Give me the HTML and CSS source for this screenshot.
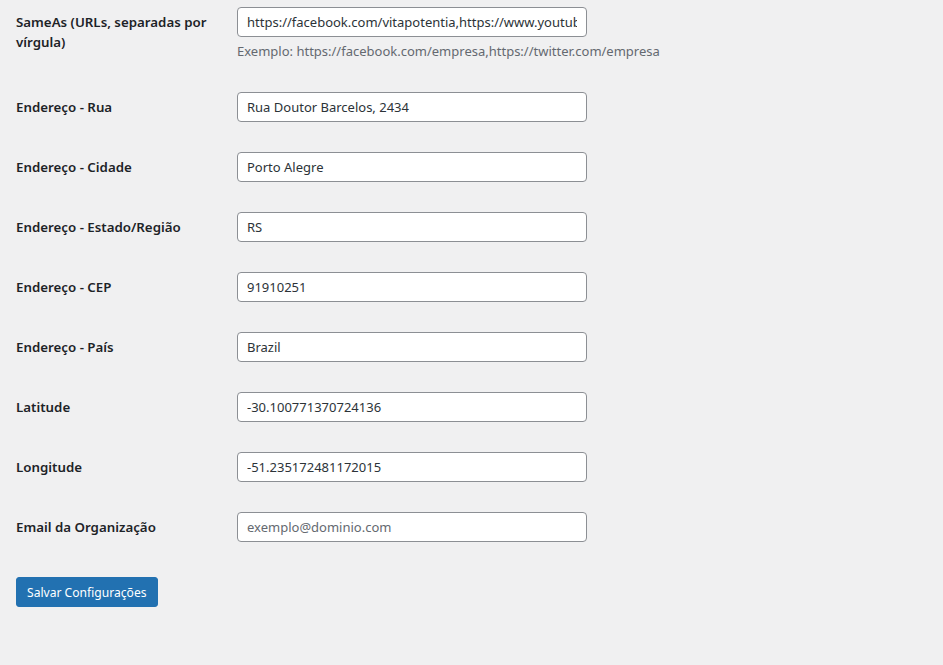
FILE: index.html
```html
<!DOCTYPE html>
<html lang="pt-BR">
<head>
	<meta charset="UTF-8">
	<title>Configurações da Organização</title>
	<link rel="stylesheet" href="styles.css">
</head>
<body>
	<div class="wrap">
		<form class="settings">
			<div class="row row-desc">
				<label class="label" for="sameas">SameAs (URLs, separadas por vírgula)</label>
				<div class="control">
					<input id="sameas" class="text" type="text" value="https://facebook.com/vitapotentia,https://www.youtube.com/vitapotentia">
					<p class="description">Exemplo: https://facebook.com/empresa,https://twitter.com/empresa</p>
				</div>
			</div>
			<div class="row">
				<label class="label" for="rua">Endereço - Rua</label>
				<div class="control"><input id="rua" class="text" type="text" value="Rua Doutor Barcelos, 2434"></div>
			</div>
			<div class="row">
				<label class="label" for="cidade">Endereço - Cidade</label>
				<div class="control"><input id="cidade" class="text" type="text" value="Porto Alegre"></div>
			</div>
			<div class="row">
				<label class="label" for="estado">Endereço - Estado/Região</label>
				<div class="control"><input id="estado" class="text" type="text" value="RS"></div>
			</div>
			<div class="row">
				<label class="label" for="cep">Endereço - CEP</label>
				<div class="control"><input id="cep" class="text" type="text" value="91910251"></div>
			</div>
			<div class="row">
				<label class="label" for="pais">Endereço - País</label>
				<div class="control"><input id="pais" class="text" type="text" value="Brazil"></div>
			</div>
			<div class="row">
				<label class="label" for="lat">Latitude</label>
				<div class="control"><input id="lat" class="text" type="text" value="-30.100771370724136"></div>
			</div>
			<div class="row">
				<label class="label" for="lng">Longitude</label>
				<div class="control"><input id="lng" class="text" type="text" value="-51.235172481172015"></div>
			</div>
			<div class="row">
				<label class="label" for="email">Email da Organização</label>
				<div class="control"><input id="email" class="text" type="email" placeholder="exemplo@dominio.com"></div>
			</div>
			<p class="submit">
				<button type="button" class="button-primary">Salvar Configurações</button>
			</p>
		</form>
	</div>
</body>
</html>
```
FILE: styles.css
```css
html{
	background: #f0f0f1;
}
body{
	margin: 0;
	color: #1d2327;
	font-family: "Noto Sans", "Open Sans", sans-serif;
	font-size: 14px;
}
.wrap{
	margin-top: -8px;
	padding-left: 16px;
}
.row{
	display: flex;
	align-items: flex-start;
}
.label{
	width: 200px;
	padding: 20px 11px 20px 0;
	font-size: 13.3px;
	font-weight: 600;
	line-height: 20px;
}
.control{
	padding: 15px 10px;
}
.text{
	box-sizing: border-box;
	width: 350px;
	height: 30px;
	margin: 0;
	padding: 0 9px;
	border: 1px solid #8c8f94;
	border-radius: 4px;
	background: #fff;
	color: #2c3338;
	font-family: inherit;
	font-size: 13px;
	outline: none;
}
.text::placeholder{
	color: #646970;
}
.description{
	margin: 4px 0 0;
	color: #646970;
	font-size: 13px;
	line-height: 21px;
}
.submit{
	margin: 20px 0 0;
	padding: 0;
}
.button-primary{
	height: 30px;
	padding: 0 10px;
	border: 1px solid #2271b1;
	border-radius: 3px;
	background: #2271b1;
	color: #fff;
	font-family: inherit;
	font-size: 12.1px;
	cursor: pointer;
}
```
